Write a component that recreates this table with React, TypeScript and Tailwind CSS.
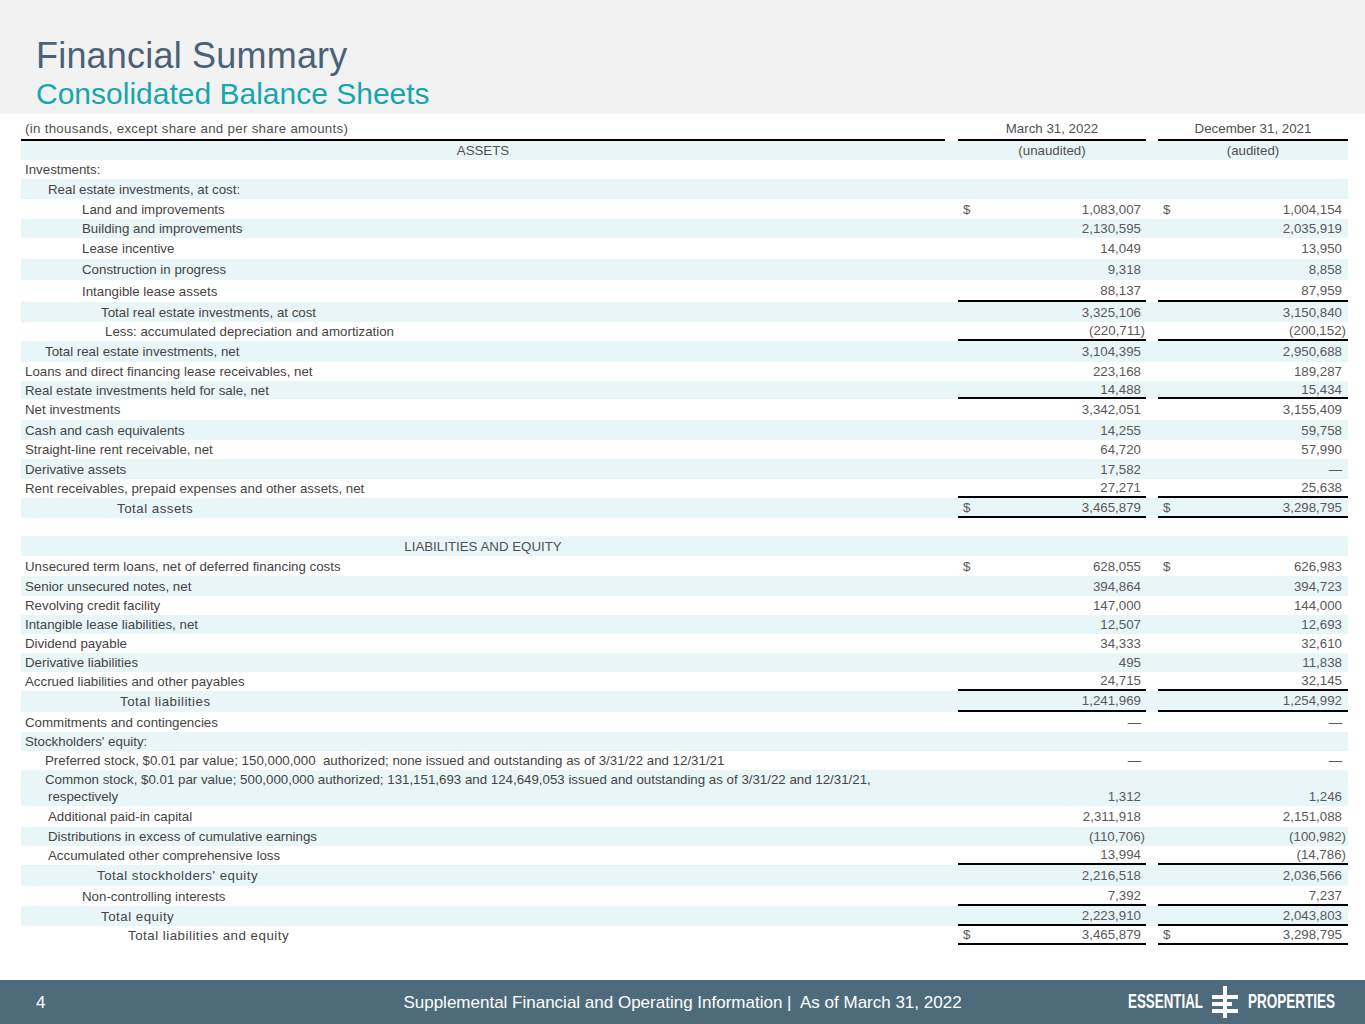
import React from 'react';

interface Line {
  label: string;
  pad: string;
  h: string;
  a?: string;
  b?: string;
  dollar?: boolean;
  under?: boolean;
  wide?: boolean;
  center?: boolean;
  second?: string;
}

const rows: Line[] = [
  { label: 'ASSETS', pad: 'pl-0', h: 'h-[19px]', a: '(unaudited)', b: '(audited)', center: true },
  { label: 'Investments:', pad: 'pl-[4px]', h: 'h-[19px]' },
  { label: 'Real estate investments, at cost:', pad: 'pl-[27px]', h: 'h-[20px]' },
  { label: 'Land and improvements', pad: 'pl-[61px]', h: 'h-[20px]', a: '1,083,007', b: '1,004,154', dollar: true },
  { label: 'Building and improvements', pad: 'pl-[61px]', h: 'h-[19px]', a: '2,130,595', b: '2,035,919' },
  { label: 'Lease incentive', pad: 'pl-[61px]', h: 'h-[21px]', a: '14,049', b: '13,950' },
  { label: 'Construction in progress', pad: 'pl-[61px]', h: 'h-[21px]', a: '9,318', b: '8,858' },
  { label: 'Intangible lease assets', pad: 'pl-[61px]', h: 'h-[22px]', a: '88,137', b: '87,959', under: true },
  { label: 'Total real estate investments, at cost', pad: 'pl-[80px]', h: 'h-[20px]', a: '3,325,106', b: '3,150,840' },
  { label: 'Less: accumulated depreciation and amortization', pad: 'pl-[84px]', h: 'h-[19px]', a: '(220,711)', b: '(200,152)', under: true },
  { label: 'Total real estate investments, net', pad: 'pl-[24px]', h: 'h-[21px]', a: '3,104,395', b: '2,950,688' },
  { label: 'Loans and direct financing lease receivables, net', pad: 'pl-[4px]', h: 'h-[19px]', a: '223,168', b: '189,287' },
  { label: 'Real estate investments held for sale, net', pad: 'pl-[4px]', h: 'h-[18px]', a: '14,488', b: '15,434', under: true },
  { label: 'Net investments', pad: 'pl-[4px]', h: 'h-[21px]', a: '3,342,051', b: '3,155,409' },
  { label: 'Cash and cash equivalents', pad: 'pl-[4px]', h: 'h-[20px]', a: '14,255', b: '59,758' },
  { label: 'Straight-line rent receivable, net', pad: 'pl-[4px]', h: 'h-[19px]', a: '64,720', b: '57,990' },
  { label: 'Derivative assets', pad: 'pl-[4px]', h: 'h-[20px]', a: '17,582', b: '—' },
  { label: 'Rent receivables, prepaid expenses and other assets, net', pad: 'pl-[4px]', h: 'h-[19px]', a: '27,271', b: '25,638', under: true },
  { label: 'Total assets', pad: 'pl-[96px]', h: 'h-[20px]', a: '3,465,879', b: '3,298,795', dollar: true, under: true, wide: true },
  { label: '', pad: 'pl-0', h: 'h-[18px]' },
  { label: 'LIABILITIES AND EQUITY', pad: 'pl-0', h: 'h-[20px]', center: true },
  { label: 'Unsecured term loans, net of deferred financing costs', pad: 'pl-[4px]', h: 'h-[20px]', a: '628,055', b: '626,983', dollar: true },
  { label: 'Senior unsecured notes, net', pad: 'pl-[4px]', h: 'h-[20px]', a: '394,864', b: '394,723' },
  { label: 'Revolving credit facility', pad: 'pl-[4px]', h: 'h-[19px]', a: '147,000', b: '144,000' },
  { label: 'Intangible lease liabilities, net', pad: 'pl-[4px]', h: 'h-[19px]', a: '12,507', b: '12,693' },
  { label: 'Dividend payable', pad: 'pl-[4px]', h: 'h-[19px]', a: '34,333', b: '32,610' },
  { label: 'Derivative liabilities', pad: 'pl-[4px]', h: 'h-[19px]', a: '495', b: '11,838' },
  { label: 'Accrued liabilities and other payables', pad: 'pl-[4px]', h: 'h-[19px]', a: '24,715', b: '32,145', under: true },
  { label: 'Total liabilities', pad: 'pl-[99px]', h: 'h-[21px]', a: '1,241,969', b: '1,254,992', under: true, wide: true },
  { label: 'Commitments and contingencies', pad: 'pl-[4px]', h: 'h-[20px]', a: '—', b: '—' },
  { label: "Stockholders' equity:", pad: 'pl-[4px]', h: 'h-[19px]' },
  { label: 'Preferred stock, $0.01 par value; 150,000,000  authorized; none issued and outstanding as of 3/31/22 and 12/31/21', pad: 'pl-[24px]', h: 'h-[19px]', a: '—', b: '—' },
  { label: 'Common stock, $0.01 par value; 500,000,000 authorized; 131,151,693 and 124,649,053 issued and outstanding as of 3/31/22 and 12/31/21,', second: 'respectively', pad: 'pl-[24px]', h: 'h-[36px]', a: '1,312', b: '1,246' },
  { label: 'Additional paid-in capital', pad: 'pl-[27px]', h: 'h-[21px]', a: '2,311,918', b: '2,151,088' },
  { label: 'Distributions in excess of cumulative earnings', pad: 'pl-[27px]', h: 'h-[19px]', a: '(110,706)', b: '(100,982)' },
  { label: 'Accumulated other comprehensive loss', pad: 'pl-[27px]', h: 'h-[19px]', a: '13,994', b: '(14,786)', under: true },
  { label: "Total stockholders' equity", pad: 'pl-[76px]', h: 'h-[21px]', a: '2,216,518', b: '2,036,566', wide: true },
  { label: 'Non-controlling interests', pad: 'pl-[61px]', h: 'h-[20px]', a: '7,392', b: '7,237', under: true },
  { label: 'Total equity', pad: 'pl-[80px]', h: 'h-[20px]', a: '2,223,910', b: '2,043,803', under: true, wide: true },
  { label: 'Total liabilities and equity', pad: 'pl-[107px]', h: 'h-[19px]', a: '3,465,879', b: '3,298,795', dollar: true, under: true, wide: true },
];

function Value({ v }: { v?: string }) {
  if (!v) return <span />;
  if (v.startsWith('(')) {
    return (
      <span>
        {v.slice(0, -1)}
        <span className="-mr-[4px]">)</span>
      </span>
    );
  }
  return <span>{v}</span>;
}

function NumCell({ v, dollar, under, last, bottom }: { v?: string; dollar?: boolean; under?: boolean; last?: boolean; bottom?: boolean }) {
  return (
    <div
      className={`flex justify-between pl-[5px] text-[#595959] ${bottom ? 'items-end pb-[2px]' : 'items-center'} ${last ? 'pr-[6px]' : 'pr-[5px]'} ${under ? 'border-b-2 border-black' : ''}`}
    >
      <span>{dollar ? '$' : ''}</span>
      <Value v={v} />
    </div>
  );
}

function Row({ r, idx }: { r: Line; idx: number }) {
  const band = idx % 2 === 0 ? 'bg-[#e8f6f7]' : 'bg-white';
  return (
    <div className={`grid grid-cols-[924px_13px_188px_12px_190px] ${r.h} ${band}`}>
      {r.second ? (
        <div className="flex flex-col justify-center leading-[17px] text-[#444444]">
          <div className={r.pad}>{r.label}</div>
          <div className="pl-[27px]">{r.second}</div>
        </div>
      ) : (
        <div
          className={`flex items-center whitespace-pre text-[#444444] ${r.center ? 'justify-center text-[#505050]' : r.pad} ${r.wide ? 'tracking-[0.5px]' : ''}`}
        >
          {r.label}
        </div>
      )}
      <div />
      {r.center && r.a ? (
        <div className="flex items-center justify-center text-[#505050]">{r.a}</div>
      ) : (
        <NumCell v={r.a} dollar={r.dollar} under={r.under} bottom={!!r.second} />
      )}
      <div />
      {r.center && r.b ? (
        <div className="flex items-center justify-center text-[#505050]">{r.b}</div>
      ) : (
        <NumCell v={r.b} dollar={r.dollar} under={r.under} last bottom={!!r.second} />
      )}
    </div>
  );
}

function Logo() {
  return (
    <svg width="220" height="44" viewBox="0 0 220 44" fill="white">
      <text
        x="2"
        y="28"
        fontFamily="Liberation Sans, Arial, sans-serif"
        fontWeight="700"
        fontSize="20"
        textLength="75"
        lengthAdjust="spacingAndGlyphs"
      >
        ESSENTIAL
      </text>
      <rect x="97" y="6" width="4" height="32" />
      <rect x="86" y="15" width="26" height="4" />
      <rect x="86" y="22" width="20" height="4" />
      <rect x="86" y="29" width="26" height="4" />
      <text
        x="122"
        y="28"
        fontFamily="Liberation Sans, Arial, sans-serif"
        fontWeight="700"
        fontSize="20"
        textLength="87"
        lengthAdjust="spacingAndGlyphs"
      >
        PROPERTIES
      </text>
    </svg>
  );
}

export default function App() {
  return (
    <div className="flex h-[1024px] w-[1365px] flex-col bg-white font-['Liberation_Sans',Arial,sans-serif] text-[13.3px] leading-[15px]">
      <header className="h-[114px] bg-[#f2f2f2] pl-[36px] pt-[38px]">
        <h1 className="text-[36px] leading-[36px] tracking-[0.2px] text-[#4b6276]">Financial Summary</h1>
        <h2 className="mt-[5px] text-[30px] leading-[30px] text-[#16a6ae]">Consolidated Balance Sheets</h2>
      </header>

      <section className="ml-[21px] w-[1327px]">
        <div className="grid h-[27px] grid-cols-[924px_13px_188px_12px_190px] text-[#505050]">
          <div className="flex items-end border-b-2 border-black pb-[3px] pl-[4px] tracking-[0.3px]">
            (in thousands, except share and per share amounts)
          </div>
          <div />
          <div className="flex items-end justify-center border-b-2 border-black pb-[3px]">March 31, 2022</div>
          <div />
          <div className="flex items-end justify-center border-b-2 border-black pb-[3px]">December 31, 2021</div>
        </div>
        {rows.map((r, i) => (
          <Row key={i} r={r} idx={i} />
        ))}
      </section>

      <footer className="mt-auto grid h-[44px] grid-cols-[1fr_auto_1fr] items-center bg-[#4e6b7c] text-[17px] text-white">
        <div className="pl-[36px]">4</div>
        <div>Supplemental Financial and Operating Information |&nbsp; As of March 31, 2022</div>
        <div className="flex justify-end pr-[19px]">
          <Logo />
        </div>
      </footer>
    </div>
  );
}
